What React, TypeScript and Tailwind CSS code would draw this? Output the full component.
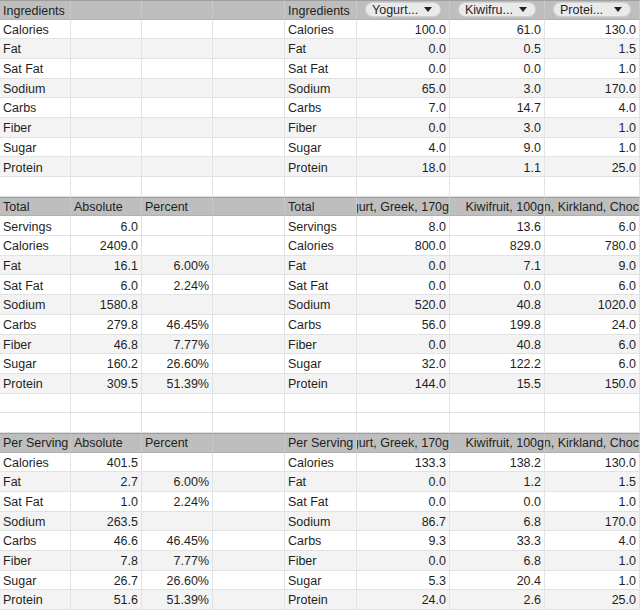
import React from "react";

type Row = { kind: "header" | "band" | "plain"; left: string[]; right: (string | { chip: string })[] };

const L = (a: string, b = "", c = "", d = ""): string[] => [a, b, c, d];

const rows: Row[] = [];
rows.push({ kind: "header", left: L("Ingredients"), right: ["Ingredients", { chip: "Yogurt..." }, { chip: "Kiwifru..." }, { chip: "Protei..." }] });
const ing: [string, string, string, string][] = [
  ["Calories", "100.0", "61.0", "130.0"],
  ["Fat", "0.0", "0.5", "1.5"],
  ["Sat Fat", "0.0", "0.0", "1.0"],
  ["Sodium", "65.0", "3.0", "170.0"],
  ["Carbs", "7.0", "14.7", "4.0"],
  ["Fiber", "0.0", "3.0", "1.0"],
  ["Sugar", "4.0", "9.0", "1.0"],
  ["Protein", "18.0", "1.1", "25.0"],
];
ing.forEach((r, i) => rows.push({ kind: i % 2 === 1 ? "band" : "plain", left: L(r[0]), right: r }));
rows.push({ kind: "plain", left: L(""), right: ["", "", "", ""] });
rows.push({ kind: "header", left: L("Total", "Absolute", "Percent"), right: ["Total", "Yogurt, Greek, 170g", "Kiwifruit, 100g", "Protein, Kirkland, Choc"] });
const tot: [string, string, string, string, string, string][] = [
  ["Servings", "6.0", "", "8.0", "13.6", "6.0"],
  ["Calories", "2409.0", "", "800.0", "829.0", "780.0"],
  ["Fat", "16.1", "6.00%", "0.0", "7.1", "9.0"],
  ["Sat Fat", "6.0", "2.24%", "0.0", "0.0", "6.0"],
  ["Sodium", "1580.8", "", "520.0", "40.8", "1020.0"],
  ["Carbs", "279.8", "46.45%", "56.0", "199.8", "24.0"],
  ["Fiber", "46.8", "7.77%", "0.0", "40.8", "6.0"],
  ["Sugar", "160.2", "26.60%", "32.0", "122.2", "6.0"],
  ["Protein", "309.5", "51.39%", "144.0", "15.5", "150.0"],
];
tot.forEach((r, i) => rows.push({ kind: i >= 2 && i % 2 === 0 ? "band" : "plain", left: L(r[0], r[1], r[2]), right: [r[0], r[3], r[4], r[5]] }));
rows.push({ kind: "plain", left: L(""), right: ["", "", "", ""] });
rows.push({ kind: "plain", left: L(""), right: ["", "", "", ""] });
rows.push({ kind: "header", left: L("Per Serving", "Absolute", "Percent"), right: ["Per Serving", "Yogurt, Greek, 170g", "Kiwifruit, 100g", "Protein, Kirkland, Choc"] });
const per: [string, string, string, string, string, string][] = [
  ["Calories", "401.5", "", "133.3", "138.2", "130.0"],
  ["Fat", "2.7", "6.00%", "0.0", "1.2", "1.5"],
  ["Sat Fat", "1.0", "2.24%", "0.0", "0.0", "1.0"],
  ["Sodium", "263.5", "", "86.7", "6.8", "170.0"],
  ["Carbs", "46.6", "46.45%", "9.3", "33.3", "4.0"],
  ["Fiber", "7.8", "7.77%", "0.0", "6.8", "1.0"],
  ["Sugar", "26.7", "26.60%", "5.3", "20.4", "1.0"],
  ["Protein", "51.6", "51.39%", "24.0", "2.6", "25.0"],
];
per.forEach((r, i) => rows.push({ kind: i % 2 === 1 ? "band" : "plain", left: L(r[0], r[1], r[2]), right: [r[0], r[3], r[4], r[5]] }));

function Chip({ label }: { label: string }) {
  return (
    <div className="flex h-full w-full items-center px-[8px]">
      <div className="flex h-[15px] w-full items-center justify-between rounded-full border border-[#d0d0d0] bg-[#eaeaea] pl-[6px] pr-[8px]">
        <span className="leading-none">{label}</span>
        <svg width="8" height="5" viewBox="0 0 8 5"><path d="M0 0H8L4 5Z" fill="#222" /></svg>
      </div>
    </div>
  );
}

export default function App() {
  return (
    <div
      className="grid h-[610px] w-[640px] grid-cols-[71px_71px_71px_72px_72px_93px_95px_95px] grid-rows-[repeat(31,minmax(0,1fr))] overflow-hidden bg-white text-[12.5px] leading-none text-[#1f1f1f]"
      style={{ fontFamily: '"Liberation Sans", Arial, sans-serif' }}
    >
      {rows.map((row, ri) => {
        const bg = row.kind === "header" ? "bg-[#bebebe]" : row.kind === "band" ? "bg-[#f3f3f3]" : "bg-white";
        const border = row.kind === "header" ? "border-b border-r border-b-[#b0b0b0] border-r-[#c8c8c8] border-t border-t-[#9e9e9e]" : "border-b border-r border-[#e2e2e2]";
        const cells: React.ReactNode[] = [];
        row.left.forEach((c, ci) => {
          const isNum = ci > 0 && row.kind !== "header";
          cells.push(
            <div key={`l${ri}-${ci}`} className={`flex min-w-0 items-center overflow-hidden whitespace-nowrap px-[3px] pt-[2px] ${bg} ${border} ${isNum ? "justify-end" : "justify-start"}`}>
              {c}
            </div>
          );
        });
        row.right.forEach((c, ci) => {
          if (typeof c !== "string") {
            cells.push(
              <div key={`r${ri}-${ci}`} className={`min-w-0 overflow-hidden whitespace-nowrap ${bg} ${border}`}>
                <Chip label={c.chip} />
              </div>
            );
            return;
          }
          const isNum = ci > 0;
          const headerLabel = row.kind === "header" && ci > 0;
          cells.push(
            <div key={`r${ri}-${ci}`} className={`flex min-w-0 items-center overflow-hidden whitespace-nowrap pt-[2px] ${headerLabel ? "pr-0" : "px-[3px]"} ${bg} ${border} ${isNum ? "justify-end" : "justify-start"}`}>
              <span className="shrink-0">{c}</span>
            </div>
          );
        });
        return <React.Fragment key={ri}>{cells}</React.Fragment>;
      })}
    </div>
  );
}
